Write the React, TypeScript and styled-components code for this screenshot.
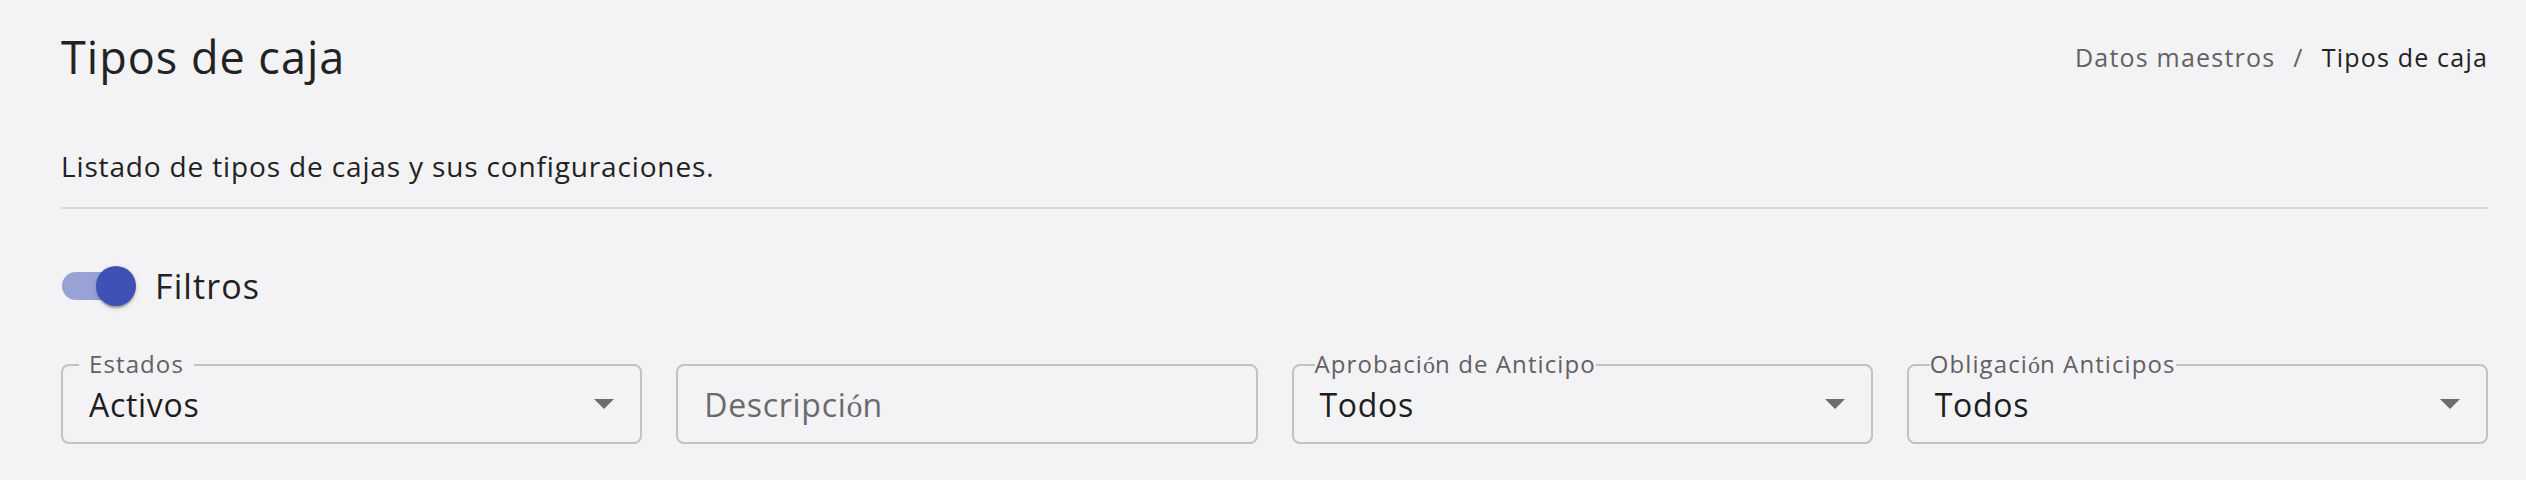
import styled, { createGlobalStyle } from "styled-components";

const GlobalStyle = createGlobalStyle`
  html, body {
    margin: 0;
    padding: 0;
    background: #f3f3f5;
  }
  body {
    font-family: "Open Sans", "Liberation Sans", sans-serif;
    color: #212121;
  }
`;

const Page = styled.div`
  padding: 30px 38px 0 61px;
`;

const Header = styled.header`
  display: flex;
  align-items: center;
  justify-content: space-between;
`;

const Title = styled.h1`
  margin: 0;
  font-size: 45px;
  line-height: 54px;
  font-weight: 500;
  letter-spacing: 1px;
  color: #222;
`;

const Crumbs = styled.nav`
  display: flex;
  align-items: center;
  font-size: 25px;
  line-height: 30px;
  letter-spacing: 1.2px;
`;

const Crumb = styled.span<{ $current?: boolean }>`
  color: ${(p) => (p.$current ? "#222" : "#626264")};
`;

const Slash = styled.span`
  color: #626264;
  margin: 0 18px;
`;

const Subtitle = styled.p`
  margin: 65px 0 0;
  font-size: 28px;
  line-height: 34px;
  letter-spacing: 0.85px;
  color: #222;
`;

const Divider = styled.hr`
  margin: 24px 0 0;
  border: none;
  height: 2px;
  background: #d9d9db;
`;

const ToggleRow = styled.div`
  display: flex;
  align-items: center;
  gap: 19px;
  margin-top: 57px;
  height: 40px;
`;

const Switch = styled.div`
  position: relative;
  width: 75px;
  height: 40px;
  display: flex;
  align-items: center;
`;

const Track = styled.div`
  width: 68px;
  height: 28px;
  margin-left: 1px;
  border-radius: 14px;
  background: #99a2d5;
`;

const Knob = styled.div`
  position: absolute;
  top: 0;
  right: 0;
  width: 40px;
  height: 40px;
  border-radius: 50%;
  background: #3f51b5;
  box-shadow: 0 4px 2px -2px rgba(0, 0, 0, 0.2), 0 2px 2px 0 rgba(0, 0, 0, 0.14),
    0 2px 6px 0 rgba(0, 0, 0, 0.12);
`;

const ToggleLabel = styled.span`
  font-size: 34px;
  line-height: 40px;
  letter-spacing: 1.1px;
  color: #222;
`;

const Filters = styled.div`
  display: grid;
  grid-template-columns: repeat(4, 1fr);
  gap: 34px;
  margin-top: 58px;
`;

const Box = styled.div`
  position: relative;
  box-sizing: border-box;
  height: 80px;
  border: 2px solid #c2c2c4;
  border-radius: 8px;
  display: flex;
  align-items: center;
  justify-content: space-between;
  padding: 2px 26px 0;
`;

const Label = styled.span<{ $tight?: boolean }>`
  position: absolute;
  top: -15px;
  left: ${(p) => (p.$tight ? "21px" : "16px")};
  padding: ${(p) => (p.$tight ? "0" : "0 10px")};
  background: #f3f3f5;
  font-size: 24px;
  line-height: 26px;
  letter-spacing: 1.1px;
  color: #616163;
`;

const Value = styled.span<{ $placeholder?: boolean }>`
  font-size: 32px;
  line-height: 38px;
  letter-spacing: 0.7px;
  color: ${(p) => (p.$placeholder ? "#6b6b6d" : "#1e1e1e")};
`;

const Accent = styled.span`
  font-family: "Liberation Serif", serif;
  letter-spacing: 0;
`;

const Arrow = styled.svg`
  width: 20px;
  height: 10px;
  flex: none;
  margin-top: -2px;
`;

const Caret = () => (
  <Arrow viewBox="0 0 10 5">
    <path d="M0 0l5 5 5-5z" fill="#6d6d6f" />
  </Arrow>
);

const Ac = ({ text }: { text: string }) => {
  const parts = text.split("ó");
  return (
    <>
      {parts.map((p, i) => (
        <span key={i}>
          {p}
          {i < parts.length - 1 && <Accent>ó</Accent>}
        </span>
      ))}
    </>
  );
};

interface SelectProps {
  label: string;
  value: string;
  tight?: boolean;
}

const SelectField = ({ label, value, tight }: SelectProps) => (
  <Box>
    <Label $tight={tight}>
      <Ac text={label} />
    </Label>
    <Value>{value}</Value>
    <Caret />
  </Box>
);

export default function App() {
  return (
    <Page>
      <GlobalStyle />
      <Header>
        <Title>Tipos de caja</Title>
        <Crumbs>
          <Crumb>Datos maestros</Crumb>
          <Slash>/</Slash>
          <Crumb $current>Tipos de caja</Crumb>
        </Crumbs>
      </Header>

      <Subtitle>Listado de tipos de cajas y sus configuraciones.</Subtitle>
      <Divider />

      <ToggleRow>
        <Switch>
          <Track />
          <Knob />
        </Switch>
        <ToggleLabel>Filtros</ToggleLabel>
      </ToggleRow>

      <Filters>
        <SelectField label="Estados" value="Activos" />
        <Box>
          <Value $placeholder>
            <Ac text="Descripción" />
          </Value>
        </Box>
        <SelectField label="Aprobación de Anticipo" value="Todos" tight />
        <SelectField label="Obligación Anticipos" value="Todos" tight />
      </Filters>
    </Page>
  );
}
